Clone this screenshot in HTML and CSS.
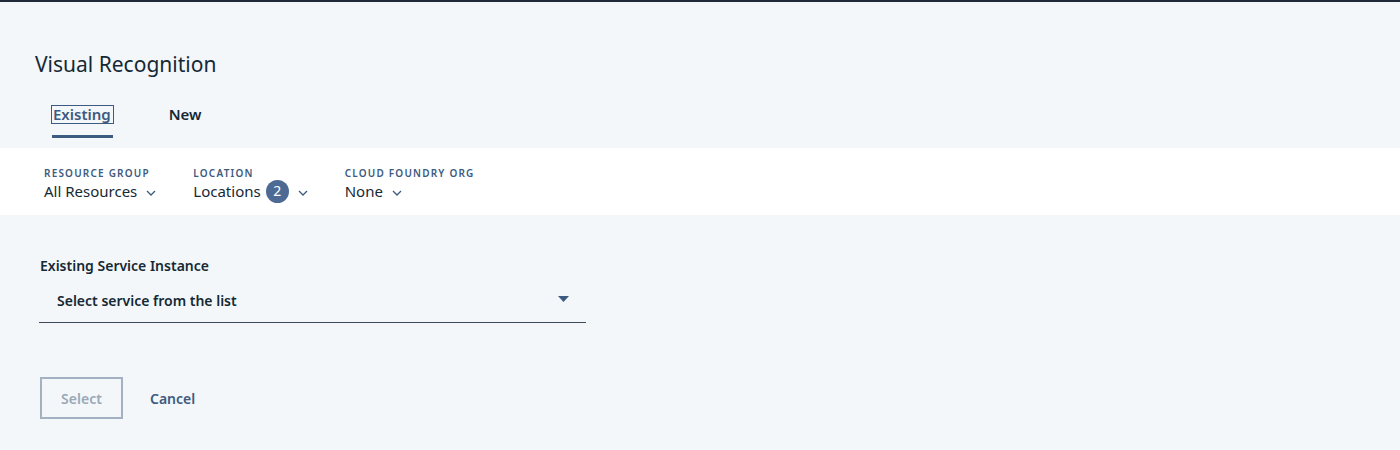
FILE: index.html
```html
<!DOCTYPE html>
<html>
<head>
<meta charset="utf-8">
<link rel="stylesheet" href="styles.css">
</head>
<body>
<div class="page">
  <header class="head">
    <h1 class="title">Visual Recognition</h1>
    <nav class="tabs">
      <div class="tab active"><span class="tab-label">Existing</span></div>
      <div class="tab"><span class="tab-label">New</span></div>
    </nav>
  </header>
  <section class="filters">
    <div class="filter">
      <div class="f-label">RESOURCE GROUP</div>
      <div class="f-value">All Resources <svg class="chev" viewBox="0 0 10 6" width="10" height="6"><path d="M1 1l4 4 4-4" fill="none" stroke="#3d5a80" stroke-width="1.3"/></svg></div>
    </div>
    <div class="filter">
      <div class="f-label">LOCATION</div>
      <div class="f-value">Locations <span class="badge">2</span><svg class="chev chev-tight" viewBox="0 0 10 6" width="10" height="6"><path d="M1 1l4 4 4-4" fill="none" stroke="#3d5a80" stroke-width="1.3"/></svg></div>
    </div>
    <div class="filter">
      <div class="f-label">CLOUD FOUNDRY ORG</div>
      <div class="f-value">None <svg class="chev" viewBox="0 0 10 6" width="10" height="6"><path d="M1 1l4 4 4-4" fill="none" stroke="#3d5a80" stroke-width="1.3"/></svg></div>
    </div>
  </section>
  <section class="form">
    <div class="field-label">Existing Service Instance</div>
    <div class="select">
      <span class="select-text">Select service from the list</span>
      <svg class="caret" viewBox="0 0 11 6" width="11" height="6"><path d="M0 0h11L5.5 6z" fill="#3d5a80"/></svg>
    </div>
    <div class="actions">
      <button class="btn-select">Select</button>
      <button class="btn-cancel">Cancel</button>
    </div>
  </section>
</div>
</body>
</html>
```
FILE: styles.css
```css
html, body {
  margin: 0;
  padding: 0;
}
body {
  background: #f3f7fa;
  font-family: "Noto Sans", "Open Sans", sans-serif;
  color: #152935;
  width: 1400px;
  height: 450px;
  overflow: hidden;
}
.page {
  border-top: 2px solid #1e2a38;
}
.head {
  padding: 48px 0 0 35px;
  height: 146px;
  box-sizing: border-box;
}
.title {
  margin: 0;
  font-size: 21px;
  font-weight: 400;
  line-height: 28px;
  color: #152935;
}
.tabs {
  display: flex;
  gap: 55px;
  margin: 28px 0 0 17px;
}
.tab {
  display: flex;
  flex-direction: column;
  align-items: flex-start;
  padding-bottom: 12px;
  border-bottom: 3px solid transparent;
}
.tab.active {
  border-bottom-color: #3d5a80;
}
.tab-label {
  font-size: 15px;
  font-weight: 600;
  line-height: 17px;
  color: #152935;
  padding: 0 2px 0 1px;
}
.tab.active .tab-label {
  color: #3d5a80;
  outline: 1px solid #3d5a80;
}
.filters {
  background: #ffffff;
  height: 67px;
  display: flex;
  gap: 37px;
  padding: 19px 0 0 44px;
  box-sizing: border-box;
}
.filter {
  display: flex;
  flex-direction: column;
}
.f-label {
  font-size: 10px;
  font-weight: 600;
  letter-spacing: 1.2px;
  color: #3d5a80;
  line-height: 12px;
}
.f-value {
  display: flex;
  align-items: center;
  font-size: 15px;
  line-height: 22px;
  color: #152935;
  height: 22px;
  margin-top: 1px;
}
.chev {
  margin-left: 9px;
  margin-top: 3px;
}
.chev-tight {
  margin-left: 0;
}
.badge {
  display: inline-flex;
  align-items: center;
  justify-content: center;
  width: 23px;
  height: 23px;
  border-radius: 50%;
  background: #4c6a94;
  color: #fff;
  font-size: 14px;
  margin-left: 5px;
  margin-right: 9px;
}
.form {
  padding: 41px 0 0 40px;
}
.field-label {
  font-size: 14px;
  font-weight: 600;
  line-height: 20px;
  color: #152935;
}
.select {
  width: 547px;
  margin-left: -1px;
  height: 47px;
  box-sizing: border-box;
  border-bottom: 1px solid #3d4a5a;
  display: flex;
  align-items: center;
  justify-content: space-between;
  padding: 2px 17px 0 18px;
}
.select-text {
  font-size: 14px;
  font-weight: 600;
  color: #152935;
}
.caret {
  margin-top: -2px;
}
.actions {
  display: flex;
  align-items: center;
  gap: 27px;
  margin-top: 54px;
}
.btn-select {
  width: 83px;
  height: 42px;
  box-sizing: border-box;
  border: 2px solid #a3b1c2;
  background: transparent;
  font-family: inherit;
  font-size: 14px;
  font-weight: 600;
  color: #9aa8b8;
  padding: 0;
}
.btn-cancel {
  background: none;
  border: none;
  padding: 0;
  font-family: inherit;
  font-size: 14px;
  font-weight: 600;
  color: #3d5a80;
}
```
